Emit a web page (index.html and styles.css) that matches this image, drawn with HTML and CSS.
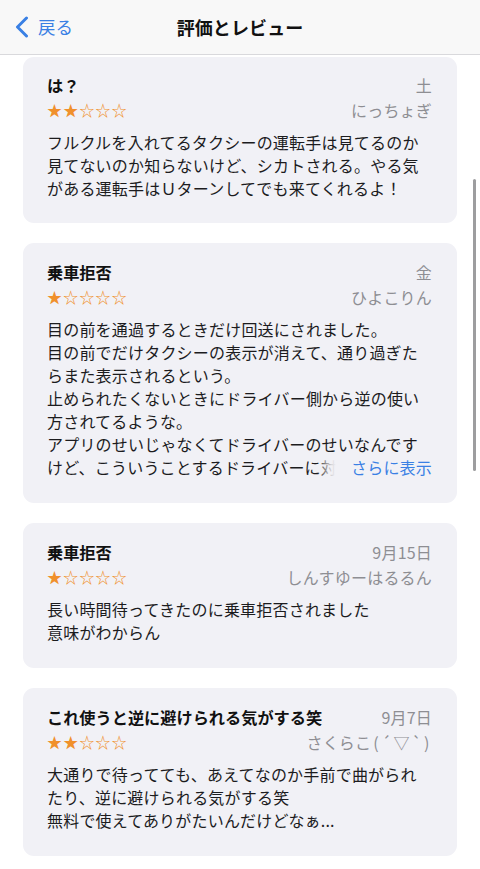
FILE: index.html
```html
<!DOCTYPE html>
<html lang="ja">
<head>
<meta charset="utf-8">
<title>評価とレビュー</title>
<link rel="stylesheet" href="styles.css">
</head>
<body>
<header class="nav">
  <div class="back">
    <svg class="chev" width="14" height="22" viewBox="0 0 14 22"><path d="M11.5 2 L2.5 11 L11.5 20" fill="none" stroke="currentColor" stroke-width="3" stroke-linecap="round" stroke-linejoin="round"/></svg>
    <span>戻る</span>
  </div>
  <h1 class="nav-title">評価とレビュー</h1>
  <div></div>
</header>
<main class="list">
  <article class="card first">
    <div class="row head"><h2 class="title">は？</h2><span class="meta">土</span></div>
    <div class="row sub"><span class="stars"><b>★★</b>☆☆☆</span><span class="meta">にっちょぎ</span></div>
    <p class="body">フルクルを入れてるタクシーの運転手は見てるのか見てないのか知らないけど、シカトされる。やる気がある運転手はＵターンしてでも来てくれるよ！</p>
  </article>
  <article class="card">
    <div class="row head"><h2 class="title">乗車拒否</h2><span class="meta">金</span></div>
    <div class="row sub"><span class="stars"><b>★</b>☆☆☆☆</span><span class="meta">ひよこりん</span></div>
    <p class="body clamp">目の前を通過するときだけ回送にされました。<br>目の前でだけタクシーの表示が消えて、通り過ぎたらまた表示されるという。<br>止められたくないときにドライバー側から逆の使い方されてるような。<br>アプリのせいじゃなくてドライバーのせいなんですけど、こういうことするドライバーに対して何とかしてほしいです。<span class="more">さらに表示</span></p>
  </article>
  <article class="card">
    <div class="row head"><h2 class="title">乗車拒否</h2><span class="meta">9月15日</span></div>
    <div class="row sub"><span class="stars"><b>★</b>☆☆☆☆</span><span class="meta">しんすゆーはるるん</span></div>
    <p class="body">長い時間待ってきたのに乗車拒否されました<br>意味がわからん</p>
  </article>
  <article class="card">
    <div class="row head"><h2 class="title">これ使うと逆に避けられる気がする笑</h2><span class="meta">9月7日</span></div>
    <div class="row sub"><span class="stars"><b>★★</b>☆☆☆</span><span class="meta">さくらこ<span class="emo">(´▽`)</span></span></div>
    <p class="body">大通りで待ってても、あえてなのか手前で曲がられたり、逆に避けられる気がする笑<br>無料で使えてありがたいんだけどなぁ...</p>
  </article>
</main>
<div class="scrollbar"></div>
</body>
</html>
```
FILE: styles.css
```css
* { box-sizing: border-box; }
html, body { margin: 0; padding: 0; }
body {
  width: 480px;
  height: 869px;
  overflow: hidden;
  background: #ffffff;
  font-family: "Noto Sans CJK JP", "Noto Sans", sans-serif;
  color: #1c1c1e;
  position: relative;
}
.nav {
  height: 55px;
  background: #f8f8f8;
  border-bottom: 1px solid #d9d9dc;
  display: grid;
  grid-template-columns: 1fr auto 1fr;
  align-items: center;
}
.back {
  display: flex;
  align-items: center;
  gap: 9px;
  padding-left: 15px;
  color: #3a80e4;
  font-size: 17.5px;
  line-height: 24px;
}
.chev { display: block; }
.nav-title {
  margin: 0;
  font-size: 18px;
  font-weight: 700;
  line-height: 24px;
  color: #111;
  letter-spacing: 0.1px;
}
.list {
  display: flex;
  flex-direction: column;
  gap: 20px;
  padding: 2px 23px 0 23px;
}
.card {
  background: #f1f1f6;
  border-radius: 11px;
  padding: 17px 25px 24px 24px;
}
.card.first { padding-top: 16px; padding-bottom: 23px; }
.row {
  display: flex;
  justify-content: space-between;
  align-items: center;
}
.head { height: 24px; }
.sub { height: 25px; }
.title {
  margin: 0;
  font-size: 16.2px;
  font-weight: 700;
  line-height: 24px;
  color: #111;
}
.meta {
  font-size: 16px;
  line-height: 24px;
  color: #8e8e93;
  letter-spacing: 0.2px;
}
.emo { letter-spacing: 2.5px; margin-left: 2px; }
.stars {
  font-size: 15px;
  line-height: 24px;
  letter-spacing: 1.2px;
  color: #f0902c;
}
.stars b { font-weight: 400; }
.body {
  margin: 9px 0 0 0;
  font-size: 16px;
  line-height: 23px;
  letter-spacing: 0.2px;
  color: #1c1c1e;
}
.clamp {
  position: relative;
  max-height: 161px;
  overflow: hidden;
}
.more {
  position: absolute;
  right: 0;
  bottom: 0;
  padding-left: 40px;
  line-height: 23px;
  color: #3a80e4;
  background: linear-gradient(to right, rgba(241,241,246,0) 6px, rgba(241,241,246,0.85) 20px, #f1f1f6 25px);
}
.scrollbar {
  position: absolute;
  left: 473px;
  top: 179px;
  width: 3px;
  height: 292px;
  border-radius: 2px;
  background: #9d9d9f;
}
```
